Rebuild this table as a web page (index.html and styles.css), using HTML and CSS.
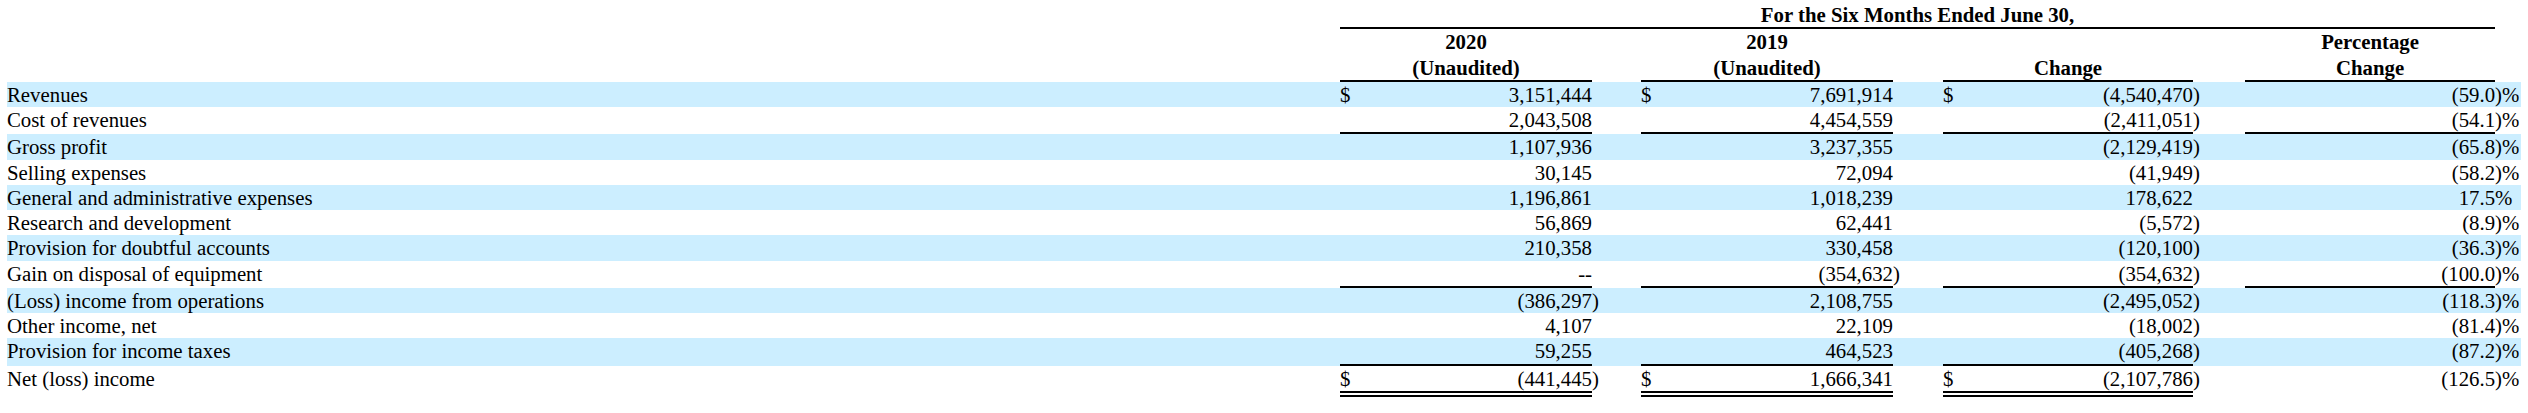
FILE: index.html
```html
<!DOCTYPE html>
<html>
<head>
<meta charset="utf-8">
<link rel="stylesheet" href="styles.css">
</head>
<body>
<table class="fin">
<colgroup>
<col class="w-label">
<col class="w-cur"><col class="w-num"><col class="w-gap1">
<col class="w-cur"><col class="w-num"><col class="w-gap2">
<col class="w-cur"><col class="w-num3"><col class="w-gap3">
<col class="w-pct"><col class="w-sfx">
</colgroup>
<tbody>
<tr>
<td></td>
<td colspan="10" class="hd u">For the Six Months Ended June 30,</td>
<td></td>
</tr>
<tr>
<td></td>
<td colspan="2" class="hd u">2020<br>(Unaudited)</td>
<td></td>
<td colspan="2" class="hd u">2019<br>(Unaudited)</td>
<td></td>
<td colspan="2" class="hd u bottom">Change</td>
<td></td>
<td class="hd u">Percentage<br>Change</td>
<td></td>
</tr>
<tr class="alt">
<td class="lbl">Revenues</td>
<td>$</td><td class="num">3,151,444</td><td></td>
<td>$</td><td class="num">7,691,914</td><td></td>
<td>$</td><td class="num">(4,540,470</td><td>)</td>
<td class="num">(59.0</td><td>)%</td>
</tr>
<tr>
<td class="lbl">Cost of revenues</td>
<td class="u"></td><td class="num u">2,043,508</td><td></td>
<td class="u"></td><td class="num u">4,454,559</td><td></td>
<td class="u"></td><td class="num u">(2,411,051</td><td>)</td>
<td class="num u">(54.1</td><td>)%</td>
</tr>
<tr class="alt">
<td class="lbl">Gross profit</td>
<td></td><td class="num">1,107,936</td><td></td>
<td></td><td class="num">3,237,355</td><td></td>
<td></td><td class="num">(2,129,419</td><td>)</td>
<td class="num">(65.8</td><td>)%</td>
</tr>
<tr>
<td class="lbl">Selling expenses</td>
<td></td><td class="num">30,145</td><td></td>
<td></td><td class="num">72,094</td><td></td>
<td></td><td class="num">(41,949</td><td>)</td>
<td class="num">(58.2</td><td>)%</td>
</tr>
<tr class="alt">
<td class="lbl">General and administrative expenses</td>
<td></td><td class="num">1,196,861</td><td></td>
<td></td><td class="num">1,018,239</td><td></td>
<td></td><td class="num">178,622</td><td></td>
<td class="num">17.5</td><td>%</td>
</tr>
<tr>
<td class="lbl">Research and development</td>
<td></td><td class="num">56,869</td><td></td>
<td></td><td class="num">62,441</td><td></td>
<td></td><td class="num">(5,572</td><td>)</td>
<td class="num">(8.9</td><td>)%</td>
</tr>
<tr class="alt">
<td class="lbl">Provision for doubtful accounts</td>
<td></td><td class="num">210,358</td><td></td>
<td></td><td class="num">330,458</td><td></td>
<td></td><td class="num">(120,100</td><td>)</td>
<td class="num">(36.3</td><td>)%</td>
</tr>
<tr>
<td class="lbl">Gain on disposal of equipment</td>
<td class="u"></td><td class="num u">--</td><td></td>
<td class="u"></td><td class="num u">(354,632</td><td>)</td>
<td class="u"></td><td class="num u">(354,632</td><td>)</td>
<td class="num u">(100.0</td><td>)%</td>
</tr>
<tr class="alt">
<td class="lbl">(Loss) income from operations</td>
<td></td><td class="num">(386,297</td><td>)</td>
<td></td><td class="num">2,108,755</td><td></td>
<td></td><td class="num">(2,495,052</td><td>)</td>
<td class="num">(118.3</td><td>)%</td>
</tr>
<tr>
<td class="lbl">Other income, net</td>
<td></td><td class="num">4,107</td><td></td>
<td></td><td class="num">22,109</td><td></td>
<td></td><td class="num">(18,002</td><td>)</td>
<td class="num">(81.4</td><td>)%</td>
</tr>
<tr class="alt">
<td class="lbl">Provision for income taxes</td>
<td class="u"></td><td class="num u">59,255</td><td></td>
<td class="u"></td><td class="num u">464,523</td><td></td>
<td class="u"></td><td class="num u">(405,268</td><td>)</td>
<td class="num">(87.2</td><td>)%</td>
</tr>
<tr>
<td class="lbl">Net (loss) income</td>
<td class="uu">$</td><td class="num uu">(441,445</td><td>)</td>
<td class="uu">$</td><td class="num uu">1,666,341</td><td></td>
<td class="uu">$</td><td class="num uu">(2,107,786</td><td>)</td>
<td class="num">(126.5</td><td>)%</td>
</tr>
</tbody>
</table>
</body>
</html>
```

FILE: styles.css
```css
html, body {
  background: #ffffff;
}
body {
  margin: 0;
  padding: 2px 7px 0 7px;
  font-family: "Liberation Serif", "Times New Roman", serif;
  font-size: 20.8px;
  color: #000000;
}
.fin {
  border-collapse: separate;
  border-spacing: 0;
  table-layout: fixed;
  width: 2514px;
}
.fin td {
  padding: 0;
  line-height: 25.25px;
  white-space: nowrap;
  vertical-align: top;
  text-align: left;
}
.w-label { width: 1333px; }
.w-cur { width: 20px; }
.w-num { width: 232px; }
.w-num3 { width: 230px; }
.w-gap1 { width: 49px; }
.w-gap2 { width: 50px; }
.w-gap3 { width: 52px; }
.w-pct { width: 250px; }
.w-sfx { width: 26px; }
.fin td.hd {
  font-weight: bold;
  text-align: center;
}
.fin td.bottom {
  vertical-align: bottom;
}
.fin td.num {
  text-align: right;
}
.fin td.u {
  border-bottom: 2px solid #000000;
}
.fin td.uu {
  border-bottom: 6px double #000000;
}
.alt {
  background: #cceeff;
}
```
